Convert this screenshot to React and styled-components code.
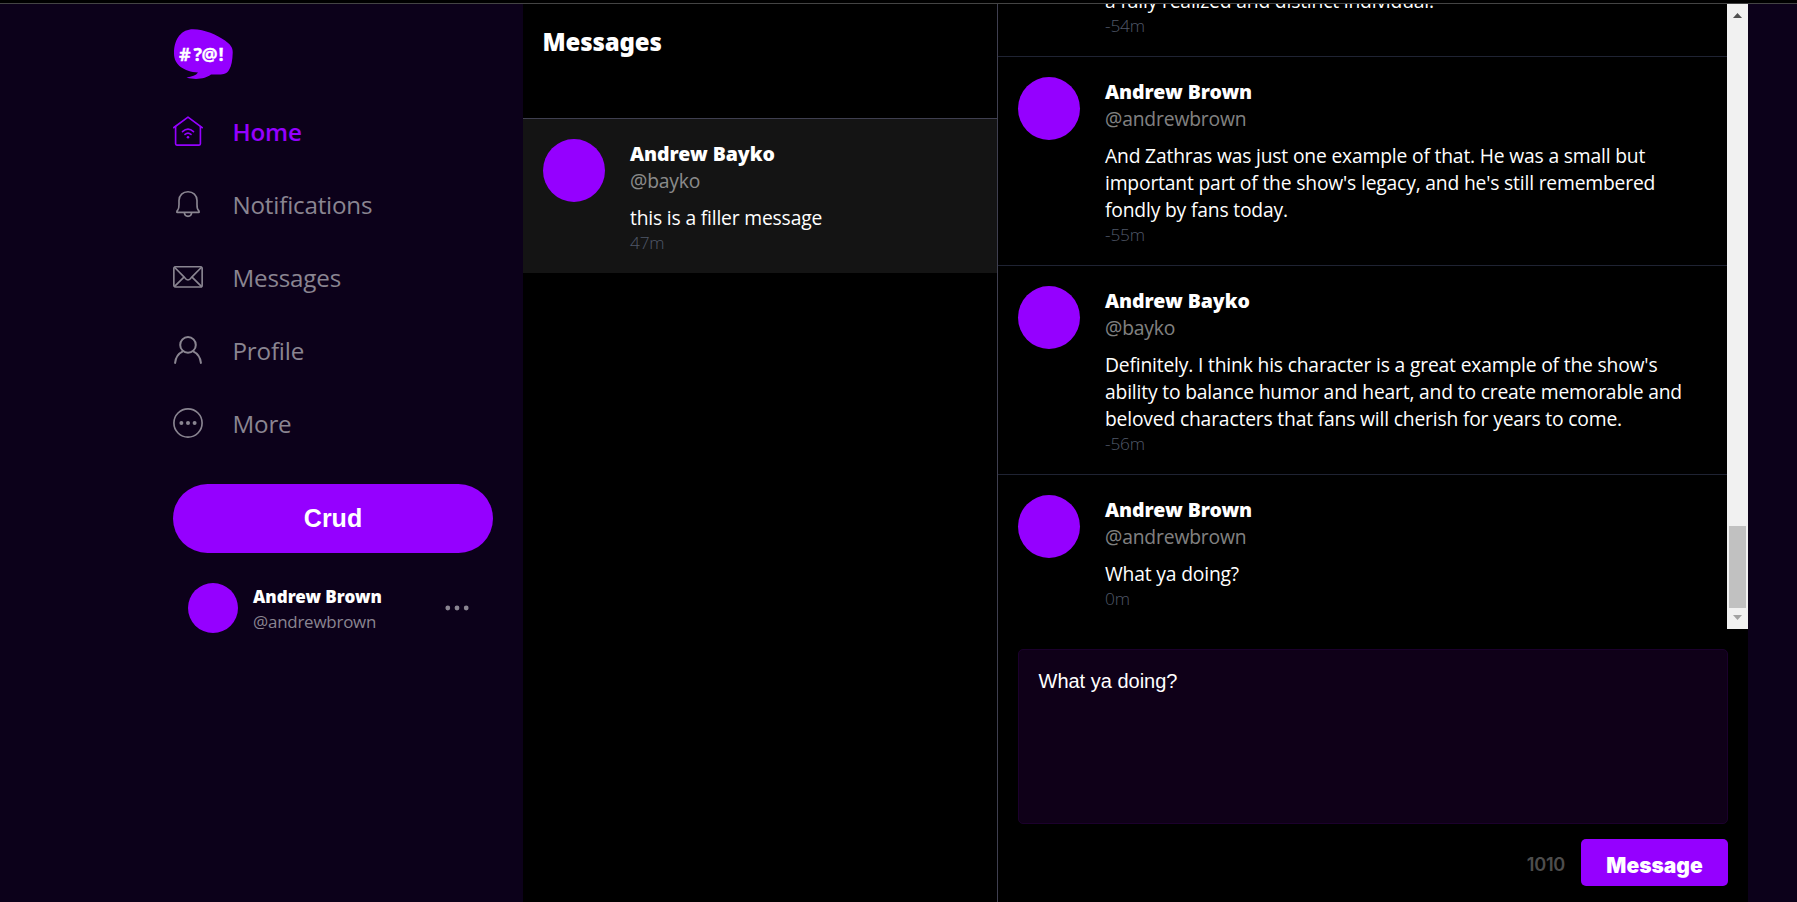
import React, { useState } from 'react';
import styled, { createGlobalStyle } from 'styled-components';

const PURPLE = '#9500ff';
const UI_FONT = '"Open Sans", "Noto Sans", sans-serif';
const HEAVY_FONT = '"Noto Sans", "Open Sans", sans-serif';

const GlobalStyle = createGlobalStyle`
  * { box-sizing: border-box; }
  body { margin: 0; background: #0c011a; overflow: hidden; }
`;

const Page = styled.div`
  display: flex;
  flex-direction: column;
  height: 100vh;
  color: #fff;
  font-family: ${UI_FONT};
`;

const TopEdge = styled.div`
  flex: none;
  height: 4px;
  background: #000;
  border-bottom: 1px solid #444;
`;

const Columns = styled.div`
  display: flex;
  flex: 1;
  min-height: 0;
`;

const Sidebar = styled.aside`
  width: 523px;
  padding: 25px 30px 0 173px;
`;

const LogoImage = styled.svg`
  display: block;
  width: 60px;
  height: 51px;
  margin-bottom: 36px;
  text {
    font: 700 18px ${UI_FONT};
    fill: #fff;
    stroke: #fff;
    stroke-width: 0.3px;
  }
`;

const Nav = styled.nav`
  display: flex;
  flex-direction: column;
  gap: 43px;
`;

const NavItem = styled.a`
  display: flex;
  align-items: center;
  gap: 29.5px;
  height: 30px;
  font-size: 24.2px;
  letter-spacing: -0.2px;
  font-weight: ${(p) => (p.$active ? 600 : 400)};
  color: ${(p) => (p.$active ? PURPLE : '#8a8591')};
`;

const NavLabel = styled.span`
  line-height: 32px;
  padding-top: 2px;
`;

const NavIcon = styled.svg`
  flex: none;
  width: 30px;
  height: 30px;
  fill: none;
  stroke: currentColor;
  stroke-width: ${(p) => p.$weight || 1.65};
  stroke-linecap: round;
  stroke-linejoin: round;
`;

const CrudButton = styled.button`
  display: block;
  width: 320px;
  height: 69px;
  margin-top: 46px;
  padding: 0;
  border: 0;
  border-radius: 35px;
  background: ${PURPLE};
  color: #fff;
  font: 700 25px "Liberation Sans", sans-serif;
`;

const ProfileCard = styled.div`
  display: flex;
  align-items: center;
  gap: 15px;
  margin-top: 30px;
  padding: 0 24.5px 0 15px;
`;

const Avatar = styled.div`
  flex: none;
  width: ${(p) => p.$width}px;
  height: ${(p) => p.$height}px;
  border-radius: 50%;
  background: ${PURPLE};
`;

const ProfileText = styled.div`
  flex: 1;
  line-height: 25px;
  margin-bottom: -2px;
`;

const ProfileName = styled.div`
  font: 900 17px/25px ${HEAVY_FONT};
`;

const ProfileHandle = styled.div`
  font-size: 16.9px;
  letter-spacing: -0.2px;
  color: #8a8591;
`;

const Dots = styled.svg`
  width: 24px;
  height: 8px;
  fill: #8a8591;
`;

const GroupColumn = styled.section`
  width: 475px;
  background: #000;
  border-right: 1px solid #3f3f50;
`;

const GroupHeader = styled.header`
  height: 115px;
  padding: 20px 20px 20px 19.5px;
  border-bottom: 1px solid #3f3f50;
  font: 900 24px/35px ${HEAVY_FONT};
  letter-spacing: -0.15px;
`;

const Item = styled.article`
  display: flex;
  flex: none;
  gap: 25px;
  padding: 20px 20px 19px;
  background: ${(p) => (p.$active ? '#141414' : 'transparent')};
  border-bottom: ${(p) => (p.$divided ? '1px solid #1f2333' : '0')};
`;

const ItemBody = styled.div`
  flex: 1;
  padding-top: 1px;
  font-size: 19.3px;
  line-height: 27px;
  letter-spacing: -0.18px;
`;

const ItemName = styled.div`
  font: 900 19.5px/27px ${HEAVY_FONT};
  letter-spacing: -0.05px;
`;

const ItemHandle = styled.div`
  letter-spacing: -0.15px;
  color: rgba(255, 255, 255, 0.52);
`;

const ItemText = styled.p`
  margin: 10px 0 0;
  white-space: pre-line;
`;

const ItemTime = styled.div`
  font-size: 17.3px;
  font-weight: 300;
  line-height: 23px;
  color: #505869;
`;

const ChatColumn = styled.main`
  display: flex;
  flex-direction: column;
  width: 750px;
  background: #000;
`;

const Thread = styled.div`
  display: flex;
  flex: none;
  height: 625px;
`;

const ThreadItems = styled.div`
  display: flex;
  flex: 1;
  flex-direction: column;
  justify-content: flex-end;
  overflow: hidden;
`;

const Scrollbar = styled.div`
  display: flex;
  flex-direction: column;
  width: 21px;
  background: #f1f1f1;
`;

const ScrollTrack = styled.div`
  display: flex;
  flex: 1;
  flex-direction: column;
  justify-content: flex-end;
  padding: 0 2px;
`;

const ScrollThumb = styled.div`
  height: 82px;
  background: #c1c1c1;
`;

const ScrollArrow = styled.svg`
  display: block;
  width: 21px;
  height: 21px;
  fill: ${(p) => (p.$disabled ? '#a3a3a3' : '#505050')};
`;

const Composer = styled.form`
  padding: 20px 20px 0;
`;

const ComposerInput = styled.textarea`
  display: block;
  width: 710px;
  height: 175px;
  padding: 20px 20px 20px 19.5px;
  border: 1px solid #1b002c;
  border-radius: 5px;
  outline: 0;
  resize: none;
  overflow: hidden;
  background: #0f0018;
  color: #fff;
  font: 20px/23px "Liberation Sans", sans-serif;
`;

const ComposerFooter = styled.div`
  display: flex;
  align-items: center;
  justify-content: flex-end;
  gap: 16px;
  margin-top: 15px;
`;

const CharCount = styled.div`
  padding-top: 4px;
  font: 600 18.2px/23px Inter, sans-serif;
  letter-spacing: -0.3px;
  color: #4d4d4d;
`;

const SendButton = styled.button`
  width: 147px;
  height: 47px;
  padding: 5px 0 0;
  border: 0;
  border-radius: 5px;
  background: ${PURPLE};
  color: #fff;
  font: 900 21px Inter, sans-serif;
`;

function Logo() {
  return (
    <LogoImage viewBox="0 0 60 51">
      <path
        fill={PURPLE}
        d="M1 24.5C1 9 9 .2 20 .2C32 .2 44 6 52 11.5C57.5 15.5 60 18.5 59.7 24C59.5 31 58.5 37 56 41C54 44.5 51 45.6 46 45.6C42 45.7 39.5 45.4 38 45.6C33 49.5 23 51.5 13.5 48.5C19 48 23 46.5 25 43.6C11 42.5 1 36 1 24.5Z"
      />
      <text x="6 20.5 28.4 45.6" y="32">#?@!</text>
    </LogoImage>
  );
}

const HomeIcon = () => (
  <NavIcon viewBox="0 0 30 30">
    <path d="M.9 11.5L15 1.1L29.1 11.5" strokeLinecap="square" />
    <path d="M2.6 10.5V27.8Q2.6 29.1 3.9 29.1H26.1Q27.4 29.1 27.4 27.8V10.5" />
    <path d="M9.5 15.6Q15 10.8 20.5 15.6M12 18.4Q15 15.8 18 18.4" />
    <circle cx="15" cy="21.2" r="1.3" fill="currentColor" stroke="none" />
  </NavIcon>
);

const BellIcon = () => (
  <NavIcon viewBox="0 0 30 30">
    <path d="M4.2 23.4C3.5 23.4 3.9 22 4.7 21.2C6 19.8 6 18.5 6 15.5V11.5C6 6 10 2.7 15 2.7S24 6 24 11.5V15.5C24 18.5 24 19.8 25.3 21.2C26.1 22 26.5 23.4 25.8 23.4Z" />
    <path d="M11.4 24C11.6 26.2 13 27.3 15 27.3S18.4 26.2 18.6 24" />
  </NavIcon>
);

const EnvelopeIcon = () => (
  <NavIcon viewBox="0 0 30 30">
    <rect x=".85" y="4.7" width="28.3" height="20.3" rx="1.8" />
    <path d="M1.7 5.5L11.5 15.4Q15 20.6 18.5 15.4L28.3 5.5M1.6 24.3L10.7 15.3M28.4 24.3L19.3 15.3" />
  </NavIcon>
);

const PersonIcon = () => (
  <NavIcon viewBox="0 0 30 30" $weight={2}>
    <circle cx="15" cy="9.9" r="7.8" />
    <path d="M2.1 27.9C2.6 22.7 5.2 18.7 9.8 16.4M27.9 27.9C27.4 22.7 24.8 18.7 20.2 16.4" />
  </NavIcon>
);

const MoreIcon = () => (
  <NavIcon viewBox="0 0 30 30">
    <circle cx="15" cy="15" r="14.1" />
    <g fill="currentColor" stroke="none">
      <circle cx="8.4" cy="15" r="2" />
      <circle cx="15" cy="15" r="2" />
      <circle cx="21.6" cy="15" r="2" />
    </g>
  </NavIcon>
);

const NAV = [
  { label: 'Home', Icon: HomeIcon, active: true },
  { label: 'Notifications', Icon: BellIcon },
  { label: 'Messages', Icon: EnvelopeIcon },
  { label: 'Profile', Icon: PersonIcon },
  { label: 'More', Icon: MoreIcon },
];

const THREAD = [
  {
    name: 'Andrew Bayko',
    handle: '@bayko',
    text: 'a fully realized and distinct individual.',
    time: '-54m',
  },
  {
    name: 'Andrew Brown',
    handle: '@andrewbrown',
    text: "And Zathras was just one example of that. He was a small but\nimportant part of the show's legacy, and he's still remembered\nfondly by fans today.",
    time: '-55m',
  },
  {
    name: 'Andrew Bayko',
    handle: '@bayko',
    text: "Definitely. I think his character is a great example of the show's\nability to balance humor and heart, and to create memorable and\nbeloved characters that fans will cherish for years to come.",
    time: '-56m',
  },
  { name: 'Andrew Brown', handle: '@andrewbrown', text: 'What ya doing?', time: '0m' },
];

function MessageItem({ name, handle, text, time, active, divided }) {
  return (
    <Item $active={active} $divided={divided}>
      <Avatar $width={62} $height={63} />
      <ItemBody>
        <ItemName>{name}</ItemName>
        <ItemHandle>{handle}</ItemHandle>
        <ItemText>{text}</ItemText>
        <ItemTime>{time}</ItemTime>
      </ItemBody>
    </Item>
  );
}

export default function App() {
  const [draft, setDraft] = useState('What ya doing?');
  return (
    <Page>
      <GlobalStyle />
      <TopEdge />
      <Columns>
        <Sidebar>
          <Logo />
          <Nav>
            {NAV.map(({ label, Icon, active }) => (
              <NavItem key={label} $active={active}>
                <Icon />
                <NavLabel>{label}</NavLabel>
              </NavItem>
            ))}
          </Nav>
          <CrudButton>Crud</CrudButton>
          <ProfileCard>
            <Avatar $width={50} $height={50} />
            <ProfileText>
              <ProfileName>Andrew Brown</ProfileName>
              <ProfileHandle>@andrewbrown</ProfileHandle>
            </ProfileText>
            <Dots viewBox="0 0 24 8">
              <circle cx="2.8" cy="4" r="2.4" />
              <circle cx="12" cy="4" r="2.4" />
              <circle cx="21.2" cy="4" r="2.4" />
            </Dots>
          </ProfileCard>
        </Sidebar>

        <GroupColumn>
          <GroupHeader>Messages</GroupHeader>
          <MessageItem
            active
            name="Andrew Bayko"
            handle="@bayko"
            text="this is a filler message"
            time="47m"
          />
        </GroupColumn>

        <ChatColumn>
          <Thread>
            <ThreadItems>
              {THREAD.map((message, i) => (
                <MessageItem key={message.time} divided={i < THREAD.length - 1} {...message} />
              ))}
            </ThreadItems>
            <Scrollbar>
              <ScrollArrow viewBox="0 0 21 21">
                <path d="M6 14L10.5 9L15 14Z" />
              </ScrollArrow>
              <ScrollTrack>
                <ScrollThumb />
              </ScrollTrack>
              <ScrollArrow viewBox="0 0 21 21" $disabled>
                <path d="M6 7H15L10.5 12Z" />
              </ScrollArrow>
            </Scrollbar>
          </Thread>
          <Composer onSubmit={(e) => e.preventDefault()}>
            <ComposerInput
              value={draft}
              spellCheck={false}
              onChange={(e) => setDraft(e.target.value)}
            />
            <ComposerFooter>
              <CharCount>{1024 - draft.length}</CharCount>
              <SendButton type="submit">Message</SendButton>
            </ComposerFooter>
          </Composer>
        </ChatColumn>
      </Columns>
    </Page>
  );
}
